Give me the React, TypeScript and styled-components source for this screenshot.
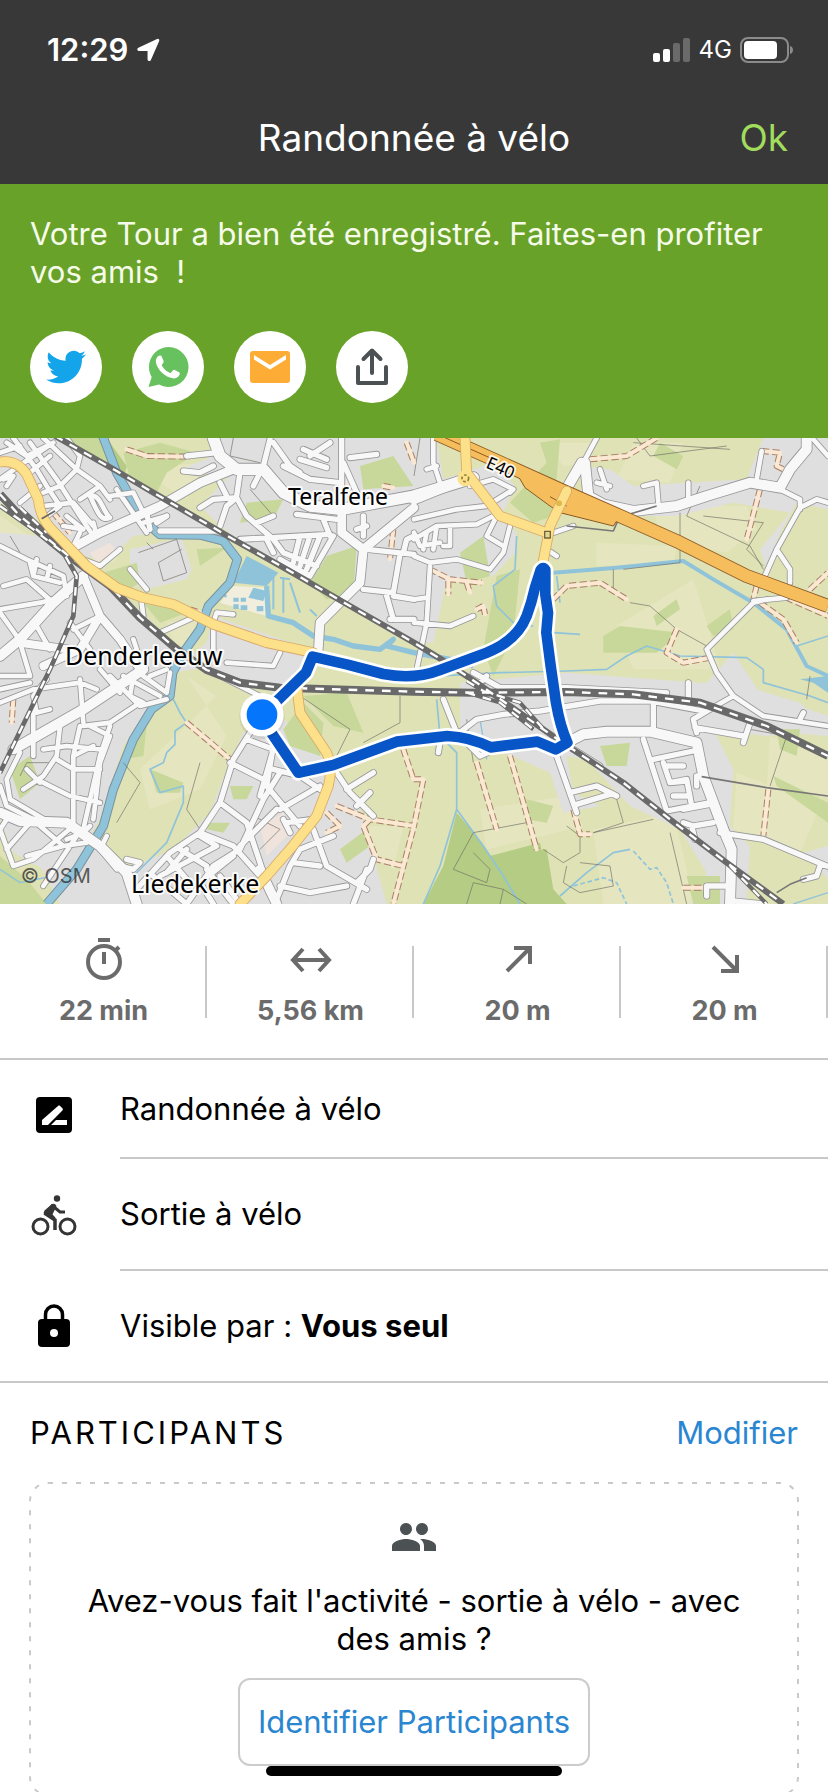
import React from "react";
import styled, { createGlobalStyle } from "styled-components";
import { FaTwitter } from "react-icons/fa";
import { MdPeople } from "react-icons/md";

const colors = {
  bar: "#383838",
  green: "#69a229",
  lime: "#a1dc5c",
  link: "#2a86d1",
  line: "#c8c8c8",
  stat: "#6b6b6b",
};

const GlobalStyle = createGlobalStyle`
  * { box-sizing: border-box; }
  html { scrollbar-width: none; }
  html::-webkit-scrollbar { display: none; }
  body {
    margin: 0;
    background: #fff;
    color: #000;
    font-family: Inter, "Liberation Sans", sans-serif;
    font-size: 31px;
    line-height: 38px;
  }
  svg { display: block; flex: none; }
`;

const Screen = styled.div`
  min-height: 100vh;
  overflow: hidden;
`;

const StatusBar = styled.div`
  display: flex;
  align-items: center;
  justify-content: space-between;
  height: 92px;
  padding: 8px 34px 0 47px;
  background: ${colors.bar};
  color: #fff;
`;

const StatusGroup = styled.div`
  display: flex;
  align-items: center;
  gap: 8px;
`;

const Clock = styled.span`
  font-size: 31px;
  font-weight: 600;
`;

const Network = styled.span`
  font-size: 24px;
  font-weight: 400;
`;

const TitleBar = styled.header`
  display: grid;
  grid-template-columns: 1fr auto 1fr;
  align-items: center;
  height: 92px;
  padding: 0 40px;
  background: ${colors.bar};
  color: #fff;
`;

const Title = styled.h1`
  grid-column: 2;
  margin: 0;
  font-size: 37px;
  font-weight: 400;
  line-height: 48px;
`;

const TextButton = styled.button<{ $color: string; $size: number }>`
  justify-self: end;
  padding: 0;
  border: 0;
  background: none;
  font: inherit;
  font-size: ${(p) => p.$size}px;
  color: ${(p) => p.$color};
`;

const Banner = styled.section`
  padding: 31px 30px 35px;
  background: ${colors.green};
  color: #f6fbe9;
`;

const BannerText = styled.p`
  margin: 0 0 40px;
  white-space: pre-wrap;
`;

const ShareList = styled.div`
  display: flex;
  gap: 30px;
`;

const ShareButton = styled.button`
  display: grid;
  place-items: center;
  width: 72px;
  height: 72px;
  padding: 0;
  border: 0;
  border-radius: 50%;
  background: #fff;
`;

const MapArea = styled.section`
  height: 466px;
  background: #dfe2b5;
  svg {
    width: 100%;
    height: 100%;
  }
`;

const Stats = styled.section`
  display: grid;
  grid-template-columns: repeat(4, 1fr);
  padding: 32px 0 30px;
  border-bottom: 2px solid ${colors.line};
`;

const Stat = styled.div`
  position: relative;
  display: flex;
  flex-direction: column;
  align-items: center;
  gap: 10px;
  color: ${colors.stat};
  font-size: 27px;
  font-weight: 700;
  line-height: 34px;
  &::after {
    content: "";
    position: absolute;
    right: 0;
    top: 10px;
    width: 2px;
    height: 72px;
    background: ${colors.line};
  }
`;

const Row = styled.div<{ $height: number }>`
  display: flex;
  align-items: center;
  height: ${(p) => p.$height}px;
  padding-left: 30px;
`;

const RowBody = styled.div<{ $last?: boolean }>`
  display: flex;
  flex: 1;
  align-items: center;
  height: 100%;
  margin-left: 42px;
  white-space: pre;
  border-bottom: ${(p) => (p.$last ? 0 : 2)}px solid ${colors.line};
`;

const Details = styled.section`
  border-bottom: 2px solid ${colors.line};
`;

const Participants = styled.section`
  padding: 31px 30px 0;
`;

const SectionHead = styled.div`
  display: flex;
  align-items: center;
  justify-content: space-between;
  margin-bottom: 30px;
`;

const SectionTitle = styled.h2`
  margin: 0;
  font-size: 31px;
  font-weight: 400;
  letter-spacing: 3px;
  text-transform: uppercase;
`;

const Card = styled.div`
  position: relative;
  display: flex;
  flex-direction: column;
  align-items: center;
  padding: 31px 48px 28px;
`;

const DashedFrame = styled.svg`
  position: absolute;
  inset: 0;
  width: 100%;
  height: 100%;
  overflow: visible;
  pointer-events: none;
`;

const Question = styled.p`
  margin: 21px 0 20px;
  text-align: center;
`;

const IdentifyButton = styled.button`
  height: 88px;
  padding: 0 18px;
  border: 2px solid #ccc;
  border-radius: 12px;
  background: #fff;
  font: inherit;
  color: ${colors.link};
`;

const HomeIndicator = styled.div`
  position: fixed;
  left: 50%;
  bottom: 16px;
  width: 296px;
  height: 10px;
  margin-left: -148px;
  border-radius: 5px;
  background: #000;
`;

/* ---------- icons ---------- */

const LocationIcon = () => (
  <svg width="24" height="24" viewBox="0 0 24 24" fill="#fff" aria-hidden="true">
    <path d="M21.400 1.600c.8-.3 1.400.3 1.100 1.100L14.200 21.600c-.5 1.100-1.900.9-1.900-.3V12.300H3.100c-1.200 0-1.500-1.400-.4-1.900z" stroke="#fff" strokeWidth="1.500" strokeLinejoin="round" />
  </svg>
);

const SignalIcon = () => (
  <svg width="38" height="24" viewBox="0 0 38 24" fill="#fff" aria-hidden="true">
    <rect x="0" y="15" width="7" height="9" rx="2" />
    <rect x="10" y="11" width="7" height="13" rx="2" />
    <rect x="20" y="5" width="7" height="19" rx="2" opacity=".25" />
    <rect x="30" y="0" width="7" height="24" rx="2" opacity=".25" />
  </svg>
);

const BatteryIcon = () => (
  <svg width="54" height="26" viewBox="0 0 54 26" aria-hidden="true">
    <rect x="1" y="1" width="47" height="24" rx="7" fill="none" stroke="#8b8b8b" strokeWidth="2" />
    <rect x="4" y="4" width="33" height="18" rx="4" fill="#fff" />
    <path d="M50 9c4 1 4 7 0 8z" fill="#8b8b8b" />
  </svg>
);

const WhatsAppIcon = () => (
  <svg width="42" height="42" viewBox="0 0 42 42" aria-hidden="true">
    <path d="M21.500 1a20 20 0 1 1-9.500 37.600L1.500 41l3.200-9.900A20 20 0 0 1 21.500 1z" fill="#67c15e" />
    <path d="M10.800 10.600c1.700-1.700 3.400-1.200 4 .2l1.700 4c.5 1.300-.2 2.300-1.400 3.600-.5.600-.4 1 0 1.700 1.700 3 4.200 5.300 7.600 6.700.6.300 1 .1 1.400-.4l1.700-2c.6-.7 1.200-.7 2-.4l3.900 1.900c1.100.6 1.300 1 .9 2.700-.6 2.200-3.300 3.900-5.600 3.800-8.700-.5-16.600-8.500-18-15.600-.5-2.300.2-4.600 1.800-6.200z" fill="#fff" />
  </svg>
);

const MailIcon = () => (
  <svg width="40" height="32" viewBox="0 0 40 32" aria-hidden="true">
    <rect width="40" height="32" rx="3" fill="#fdac35" />
    <path d="M4 4v4.500L20 18.500 36 8.500V4L20 14z" fill="#fff" />
  </svg>
);

const ShareIcon = () => (
  <svg width="36" height="40" viewBox="0 0 36 40" fill="none" stroke="#4c5154" strokeWidth="4" strokeLinecap="round" strokeLinejoin="round" aria-hidden="true">
    <path d="M4 20v16h28V20M18 26V4M9.500 12 18 3.500l8.500 8.500" />
  </svg>
);

const statIconProps = {
  width: 48,
  height: 48,
  viewBox: "0 0 48 48",
  fill: "none",
  stroke: colors.stat,
  strokeWidth: 4,
  "aria-hidden": true,
};

const StopwatchIcon = () => (
  <svg {...statIconProps}>
    <circle cx="24" cy="26" r="16" />
    <path d="M18 4h12M24 16v12M35 15l4-4" />
  </svg>
);

const DistanceIcon = () => (
  <svg {...statIconProps}>
    <path d="M7 24h34M16 13 6 24l10 11M32 13l10 11-10 11" />
  </svg>
);

const UphillIcon = () => (
  <svg {...statIconProps}>
    <path d="M13 35 35 13M20 12h16v16" />
  </svg>
);

const DownhillIcon = () => (
  <svg {...statIconProps}>
    <path d="M12 11l22 22M36 19v16H20" />
  </svg>
);

const RenameIcon = () => (
  <svg width="48" height="48" viewBox="0 0 48 48" aria-hidden="true">
    <rect x="6" y="11" width="36" height="36" rx="4" />
    <path d="M12 39v-5l16-14c.6-.6 1.500-.6 2.100 0l2.300 2.300c.6.6.6 1.500 0 2.100L18 39zM21 39l5-5h11v5z" fill="#fff" />
  </svg>
);

const CyclistIcon = () => (
  <svg width="48" height="48" viewBox="0 0 48 48" fill="none" stroke="#353535" aria-hidden="true">
    <circle cx="10.500" cy="35.500" r="7.500" strokeWidth="3" />
    <circle cx="37.500" cy="35.500" r="7.500" strokeWidth="3" />
    <circle cx="27" cy="7.500" r="3.200" fill="#353535" stroke="none" />
    <path d="M24 16l6 5h5" strokeWidth="3" />
    <path d="M23 14l-7 9 9 6v10" strokeWidth="3.500" />
    <path d="M22 13q3-1 4.500 2l-4 8.500 3 3-2 2-9-5q-1.500-2 0-4z" fill="#353535" stroke="none" />
  </svg>
);

const LockIcon = () => (
  <svg width="48" height="48" viewBox="0 0 48 48" aria-hidden="true">
    <rect x="8" y="17" width="32" height="28" rx="4" />
    <path d="M15.500 18v-5.500a8.500 8.500 0 0 1 17 0V18" fill="none" stroke="#000" strokeWidth="3.500" />
    <circle cx="24" cy="31" r="4" fill="#fff" />
  </svg>
);

/* ---------- map ---------- */

const urban = [
  "M0 6H170L350 115 640 275 650 292 470 290 400 300 330 370 250 360 140 260 0 200Z",
  "M390 340 545 305 575 400 560 430 440 460 415 450 390 430Z",
  "M555 95 640 60 630 6H1310L1330 130 1480 80 1545 150 1500 250 1550 290 1545 350 1480 420 1340 430 1300 620 1242 620 1050 510 720 320 640 250 600 210 680 130Z",
  "M0 290 130 300 330 440 520 620 640 690 520 710 470 800 370 930 300 1150 240 1260 130 1300 40 1250 0 1150Z",
  "M640 540 930 640 890 720 820 770 600 690 570 660 620 620Z",
  "M0 1150 150 1150 300 1230 380 1330 400 1404H180L120 1290Z",
  "M730 890 850 850 1010 1010 1080 1120 1120 1260 1160 1404H400L380 1300 520 1240 630 1130 680 1000Z",
  "M1740 90 1830 100 1900 150 2240 130 2290 6H2484V220L2390 200 2340 290 2300 400 2280 340 2370 230 2200 200 2030 240 1900 240 1760 180Z",
  "M1380 740 1700 710 2100 740 2200 740 2400 800 2484 880 2300 900 2140 880 2200 1000 2190 1170 2250 1230 2240 1404H2070L2120 1310 2040 1180 1890 1110 1760 970 1700 960 1720 1070 1800 1110 1690 1130 1650 1010 1380 890Z",
  "M2120 740 2200 650 2280 770 2484 840 2484 900 2240 880Z",
  "M2410 1250 2484 1230V1330Z",
];

const palePatches = [
  "M490 90 620 80 560 190 460 130Z",
  "M690 10 790 20 770 90 690 70Z",
  "M270 350 350 320 350 370 300 400Z",
  "M500 560 610 540 570 640 520 620Z",
  "M1640 20 1780 20 1770 80 1690 90Z",
  "M1900 20 2050 20 2010 140 1850 130Z",
  "M1790 320 2030 330 2020 380 1790 390Z",
  "M1960 210 2240 210 2270 280 2180 350 1980 310Z",
  "M1850 570 2080 430 2130 590 2160 700 1900 700Z",
  "M2310 900 2484 970V1080L2300 1060Z",
  "M2210 1010 2460 1110 2400 1250 2200 1180Z",
  "M1440 1120 1700 1080 1750 1170 1460 1240Z",
  "M420 1000 650 780 560 720 680 900 600 1060 450 1120Z",
  "M1100 1170 1210 1170 1180 1300 1120 1260Z",
  "M0 240 90 300 210 380 200 410 60 350 0 320Z",
  "M20 1030 60 980 110 1000 90 1080 40 1070Z",
  "M1780 1180 2020 1130 2060 1300 2080 1404H1810Z",
];

const greenPatches = [
  "M210 6H320L350 100 240 55Z",
  "M370 50 480 20 590 50 500 110 470 170 390 130Z",
  "M310 410 410 380 420 440 370 470Z",
  "M590 340 680 335 600 390Z",
  "M430 500 560 530 480 560Z",
  "M740 200 850 190 820 250 720 260Z",
  "M980 360 1070 330 1060 480 980 490 930 440Z",
  "M1080 90 1180 60 1240 150 1090 160Z",
  "M1620 20 1680 10 1660 240 1600 260 1530 200 1640 80Z",
  "M1380 350 1450 300 1470 420 1400 440Z",
  "M1490 420 1560 400 1540 600 1480 720 1450 640Z",
  "M1810 600 1860 570 2040 590 1970 650 1810 650Z",
  "M1960 540 2030 490 2040 520 1970 570Z",
  "M2120 570 2190 520 2200 580 2140 600Z",
  "M2060 1320 2160 1320 2160 1404 2080 1404Z",
  "M1980 20 2050 60 2030 100 1960 60Z",
  "M410 920 440 870 430 960 370 970Z",
  "M450 1000 550 1040 540 1070 470 1070Z",
  "M1020 1240 1100 1180 1110 1230 1040 1280Z",
  "M850 880 910 800 970 860 960 960 870 930Z",
  "M910 780 1040 770 1090 890 1000 870Z",
  "M0 1260 80 1330 140 1404H0Z",
  "M30 1000 90 960 120 1040 60 1090Z",
  "M690 1050 760 1050 740 1090 700 1090Z",
  "M620 1160 690 1160 670 1190 620 1180Z",
  "M1580 1090 1660 1110 1640 1160 1580 1150Z",
  "M2330 880 2400 880 2390 960 2340 940Z",
  "M2320 1020 2484 1100V1160L2330 1050Z",
  "M1800 930 1890 920 1880 990 1820 990Z",
];

const forest = [
  "M1370 1130 1430 1200 1470 1260 1640 1240 1660 1360 1700 1404H1270L1330 1290Z",
  "M1470 1260 1620 1220 1650 1360 1690 1404H1460Z",
  "M320 6 380 90 370 130 330 70Z",
];

const water = [
  "M740 360 835 410 800 450 700 440Z",
  "M760 455 800 465 790 495 745 485Z",
  "M2400 730 2484 720V770L2440 740Z",
];

const streams = [
  { w: 5, d: "M520 790 540 830 560 860 525 885 525 925 500 950 490 980 450 1000 480 1070 550 1050 550 1100 500 1220 400 1320" },
  { w: 16, d: "M800 450 805 540 880 560 940 600 1000 610 1060 630 1140 640 1180 610 1160 630 1242 650 1350 670 1420 690" },
  { w: 6, d: "M820 420V520M850 430V530M870 440 900 530M930 520 950 540M840 425 870 430" },
  { w: 12, d: "M1660 410 1850 395 2050 375 2140 430 2260 500 2360 580 2420 690 2484 720" },
  { w: 5, d: "M1550 300 1545 400 1480 450 1490 510 1550 570 1600 570M1670 420 1680 500M1660 590 1740 595M1320 720 1500 710 1700 705 1820 700 1880 660 1940 630 2040 660 2240 665 2290 700 2290 740 2430 780 2484 800" },
  { w: 5, d: "M1310 790 1320 900 1370 950 1370 1120 1320 1290 1270 1404M1370 1120 1450 1230 1510 1320 1560 1404M1680 1380 1760 1310 1840 1250 1890 1240" },
  { w: 4, d: "M2390 630 2484 600M1440 850 1460 970M2484 1370 2380 1404M0 1300 60 1340 160 1320" },
];

const paths =
  "M415 350 530 310 560 410 490 435 475 380 545 340M1242 120 1260 6M700 6 690 60 780 80M750 160 820 240M1900 20 2190 40M2100 150 2060 240 2250 330 2290 400M2040 230V380L1870 400M1840 400V460M1890 500 1950 510 2030 580 2120 630M2110 240 2290 260 2240 340 2290 390M370 980 420 1040 350 1160M600 980 560 1120 600 1180M900 780 1050 880 1010 960M1200 780V860L1090 920M1400 850 1420 980M1360 1300 1420 1190 1580 1160M1420 1250 1470 1300 1460 1340 1360 1300M1630 1240 1690 1280 1740 1250 1740 1200 1700 1170M1740 1280 1830 1290 1840 1350 1740 1370 1690 1340 1700 1290M1400 1404 1420 1340 1510 1360 1580 1404M1500 1404 1510 1360M1850 1090 1870 1160 1780 1190 1960 1150M2010 1190 2060 1404M2250 880 2360 900 2310 1050M1910 6 1950 60 2180 30M2430 720 2420 790M60 1020 80 980 150 980M760 1140 840 1180 780 1240M440 320 460 340M60 350 30 300";

type Road = { w: number; d: string };

const roads: Road[] = [
  // Denderleeuw, north of the railway
  { w: 14, d: "M0 130 100 60 160 20M40 6 110 100 140 150 180 210M90 20 170 130 240 240 280 300M130 6 230 100 300 150 330 190M200 6 240 60 230 100 180 150 130 170M0 50 60 30M60 200 120 150M130 210 220 200 280 270M150 60 90 110M330 180 400 170 430 230M190 270 250 280 200 240M270 180C300 170 310 230 330 245 300 260 290 220 270 180M20 150 40 120 10 130M300 150 240 190M350 160 440 290M430 260 500 240M20 20 80 60 140 30M280 260 290 300M180 210 130 250M240 290 220 330M250 370 300 390 360 340M390 400 440 460" },
  { w: 26, d: "M210 340 300 290 480 210 600 140 700 100" },
  // Teralfene
  { w: 34, d: "M640 6 660 60 710 100 790 100 850 170 930 210 1025 220 1242 180 1420 125" },
  { w: 26, d: "M1025 220V290L1090 340 1080 440 960 560 955 640M1090 340 1242 215" },
  { w: 16, d: "M550 105 600 110 640 90M560 60 650 50M810 10 790 90M820 20 870 90 900 110M900 70 980 95M850 90 930 130 1020 140M910 40 980 70M930 60 990 20M1025 6V210M1050 65 1130 55M1030 80 1070 170M480 285 650 285M660 270 680 210 710 185M710 180 720 110M710 185 740 240 820 310 850 350 950 390M600 215 640 190 710 185M660 140 680 180M770 260 820 240M890 235 1010 250M720 310 990 295M1000 300 930 420M900 300 880 380M930 300 900 390M960 300 920 400M840 370 930 420M800 310 820 350M990 300 970 250M760 150 780 110M1100 340 1242 355M1200 355 1180 470 1090 460M1180 480 1242 490M1170 550H1242M1160 480 1180 550M1210 350 1220 310 1242 300M1090 240V300M1070 280 1100 270M440 230 450 280M470 260 500 240" },
  // riverside block and the streets around it
  { w: 14, d: "M425 500 430 540M480 590 580 545M640 640V560L650 530 700 535M640 640 620 700M840 650 820 690 680 680M400 610 410 640M780 780 700 740 600 690" },
  // Denderleeuw, south of the railway
  { w: 30, d: "M0 660 60 610 160 500 250 420M0 1130 60 1155 200 1160 300 1230 380 1310 410 1404M40 940 250 820 430 700" },
  { w: 24, d: "M250 420 300 540 240 640 130 690M300 540 360 610 420 700M60 620 200 640" },
  { w: 14, d: "M0 330 80 370 190 420 200 480M90 380 100 420 180 440M110 370 100 420M150 390 140 430M0 520 120 500 200 480M10 450 80 430 160 500M50 600 0 530M110 570 150 640M210 560 270 640M300 540 220 580M60 620 90 720 0 720M0 800 100 760 240 740 290 760M140 730 100 780 110 830 150 820M100 820V960M240 730 250 860M250 870 330 860 420 800M270 870 330 900 300 980 280 1150M330 870 300 960 250 1180M240 870 220 960 220 1160M180 870 170 960 130 1020 70 1060M130 940 200 930 300 940M170 970 220 1000 300 1000M110 1030 210 1080 300 1100M220 960 280 930M60 950 20 1030 30 1090 150 1160M80 1000 120 1040M0 1050 20 1110 100 1150M20 1150 0 1180 40 1290 100 1270 220 1170M90 1160 20 1240M120 1170 190 1230 80 1260M230 1200 130 1350M200 1210 250 1190 270 1170M190 1230 260 1220M320 1200 300 1240 350 1300M330 720 420 810 500 790M370 720 480 780M430 720 500 770 510 710M300 700 360 770M400 720 390 780 430 800M450 720 500 700M0 760 90 740" },
  // Liedekerke
  { w: 16, d: "M750 890 700 970 660 1100 600 1190 510 1250 400 1370M740 910 820 940 780 1080M820 930 800 1050 900 1170M690 980 790 1030M660 1100 740 1160 800 1340M840 1010 790 1090 720 1240 640 1290 560 1404M820 1000 900 1020 960 1060M960 1050 840 1120M830 1120 720 1230M600 1190 700 1230 780 1320M500 1260 560 1330M540 1240 620 1290M600 1200 650 1230 480 1320M560 1240 500 1310M380 1270 420 1280 400 1300 360 1290M860 1160 940 1150M850 1150 870 1190M940 1180 980 1290 1100 1360M870 1290 900 1240 1000 1200M880 1280 960 1290M870 1290 830 1390M840 1350 930 1370 1040 1350M1100 1300 1060 1404M1120 1270 1110 1300 1070 1340M1010 1010 1050 1070 1120 1140M1040 1060 1120 1010M1070 1110 1110 1070M620 1300 700 1404M700 1260 600 1340 640 1404M460 1320 560 1404M660 1320 720 1404" },
  { w: 28, d: "M780 1300 830 1404" },
  // east of Teralfene
  { w: 30, d: "M1242 190 1390 130M1690 175 1745 80M1755 80 1765 180 1810 205 1900 225 2030 210 2120 180 2250 140 2340 155 2370 100 2420 40V6" },
  { w: 14, d: "M1300 6V80L1320 140M1280 100 1310 90M1242 250 1370 220 1460 210 1540 160 1500 140 1480 130 1410 150M1540 160 1530 170M1242 310 1310 270 1430 265 1480 240M1310 270 1300 340M1350 270V330L1330 330M1242 290 1260 330 1320 320M1280 290 1270 340M1490 240 1460 300 1510 330M1530 270 1510 350 1470 400 1370 370 1290 380 1242 360M1290 390 1280 560 1250 700M1242 560 1350 570 1420 540M1242 490 1280 485M1750 80 1790 6M1790 140 1830 150M1800 100 1820 160M1930 150 1970 140 1975 200M2065 140V200M2270 130 2285 45M2340 160 2400 190 2400 220M2400 215 2450 190 2484 200M2400 215 2330 340 2290 430M2330 340 2370 400V440M1660 290 1720 270M1640 340 1670 360M2300 490 2260 500 2120 640 2150 710 2200 780 2290 840 2484 870M2260 495 2360 485M2200 780 2130 820M2440 10 2484 60" },
  // around the railway fork
  { w: 30, d: "M1700 920 1750 895 1820 887H1950L2090 920 2110 1020 2170 1180 2195 1240 2190 1404" },
  { w: 16, d: "M1420 710 1500 755 1700 755 2000 770M1385 885 1430 850 1510 835 1620 825 1800 795 1950 795 2110 825M1960 800V890M1330 790 1370 890 1440 960M1440 960 1530 920M1440 740 1460 720M1930 910 2000 1125 2130 1100M1960 970 2080 945M1990 980 2010 1040 2060 1030 2075 1110M2000 990 2050 990M2010 1040 2060 1035M2020 1080H2070M2120 1350H2180M2120 1350V1380M2050 1160 2080 1170 2140 1160M2075 1170 2085 1210M2065 740V790M2090 890 2080 850 2130 820M2085 875 2230 900M2250 860 2230 920M2400 850 2410 830M2160 1190 2290 1210 2480 1290M2460 1290 2450 1320 2410 1330M1670 960 1730 1130M1710 1070 1790 1050 1850 1080M1730 1105 1830 1075M1720 940 1800 990M2090 1020V1050M1320 920 1315 950M2200 1395 2290 1404M2050 1120 2130 1105" },
];

const tracks =
  "M380 40 440 60 570 62M160 230 210 290M1150 150 1180 155M1180 280 1170 370M1220 20 1242 80M570 520 600 530M40 790 35 860M560 860 620 910 690 970M1010 1110 1110 1150 1242 1170 1180 1404M980 1130 1020 1170 980 1190M1110 1150 1090 1170 1130 1270 1210 1290M1210 940 1240 1030 1270 1030 1242 1170M1430 980 1490 1180M1530 960 1610 1240M1720 1120 1740 1195 1770 1195M1770 70 1880 60 1970 6M1290 400 1350 430 1445 440M1345 435V475M1400 440 1410 470M1430 520 1450 510 1455 535M1660 490 1700 450 1800 440 1880 490M2280 160 2240 310M2285 45 2340 50 2330 90 2350 100M2030 580 2000 650 2050 680 2130 665M2280 500 2350 550 2390 620M2360 485 2484 540M2430 460 2484 410M2270 450 2260 490M2305 1060 2290 1200M2050 1355H2120";

const motorway = "M1310 -6 1480 70 1690 165 1860 240 2040 320 2240 420 2484 510";

const mainRoads = [
  "M0 78Q50 70 80 115L115 190Q120 240 150 275L260 390 350 455 430 485 520 505 640 565 800 620 940 650",
  "M890 750 900 830 980 950Q1000 990 985 1050L950 1140 870 1240 800 1320 720 1404",
  "M1395 6 1400 110 1500 240 1640 290M1700 165 1650 270 1625 400",
];

const rails = [
  { w: 18, d: "M165 0 350 105 520 205 700 310 860 400 1050 510 1242 620 1340 680 1430 740 1530 810 1680 915 1870 1040 2010 1150 2180 1280 2350 1404" },
  { w: 24, d: "M0 175 60 240 200 355 330 450 420 545 530 640 620 702 720 740 840 755 1242 767 1420 770 1700 768 1900 775 2100 800 2300 870 2484 960" },
  { w: 14, d: "M0 210 100 280 190 350 230 420 220 540 150 700 0 1010" },
  { w: 12, d: "M1400 735 1450 765 1560 800 1640 890M1400 770 1500 800 1600 880M2190 1290 2300 1404M60 215 140 290" },
];

const river =
  "M308 0 350 110 390 180 450 270 480 296 600 297 670 315 712 370 690 440 625 510 600 580 550 650 518 710 510 780 455 820 400 910 340 1060 310 1170 230 1300 140 1404";

const route =
  "M790 835 875 752 918 710 938 662 1040 685 1150 714Q1242 732 1320 702L1460 650Q1550 615 1580 540 1595 500 1605 455L1622 402Q1630 390 1636 402V475L1644 530 1639 590 1652 690 1668 800Q1680 870 1702 920L1667 940 1612 917 1472 934Q1410 903 1342 900L1190 917 1000 987 895 1010 815 892Z";

const MapDrawing = () => (
  <svg viewBox="0 6 2484 1398" preserveAspectRatio="xMidYMid slice" role="img" aria-label="Carte du Tour" strokeLinejoin="round">
    <rect y="6" width="2484" height="1398" fill="#dfe2b5" />
    <g fill="#e5e6bf">{palePatches.map((d) => <path key={d} d={d} />)}</g>
    <g fill="#e0dfdf">{urban.map((d) => <path key={d} d={d} />)}</g>
    <g fill="#c8d79a">{greenPatches.map((d) => <path key={d} d={d} />)}</g>
    <g fill="#b4cc83">{forest.map((d) => <path key={d} d={d} />)}</g>
    <path d="M700 450 810 455 800 540 660 500Z" fill="#f1eedd" />
    <path d="M270 350 330 320 350 350 290 380ZM780 1170 850 1130 870 1190 800 1260ZM1020 130 1060 140 1060 180 1020 170Z" fill="#f0e3dc" />
    <g fill="#8fc3da">
      {water.map((d) => <path key={d} d={d} />)}
      <path d="M700 485h16v12h-16zM722 485h16v12h-16zM700 505h16v14h-16zM722 508h20v14h-20zM770 510h20v16h-20zM672 476h8v8h-8z" />
    </g>
    <g fill="none" stroke="#8fc3da">
      {streams.map((s) => <path key={s.d} d={s.d} strokeWidth={s.w} />)}
      <path d="M1900 1245 1950 1300 1970 1295 2000 1340 2020 1404M1720 1350 1810 1325 1850 1340 1880 1404" strokeWidth="5" strokeDasharray="14 8" />
      <path d={river} strokeWidth="28" stroke="#78919c" />
      <path d={river} strokeWidth="22" />
    </g>
    <path d={paths} fill="none" stroke="#6f6f66" strokeWidth="2" />
    <g fill="none" strokeLinecap="round">
      <path d={tracks} stroke="#a97f66" strokeWidth="18" strokeDasharray="22 10" strokeLinecap="butt" />
      <path d={tracks} stroke="#fae8d2" strokeWidth="12" />
      {roads.map((r) => <path key={r.d} d={r.d} stroke="#97979a" strokeWidth={r.w + 5} />)}
      {roads.map((r) => <path key={r.d} d={r.d} stroke="#f8f8f8" strokeWidth={r.w} />)}
    </g>
    <path d="M2105 1022 2300 1055 2484 1080M1700 270 1840 285 1860 240M1830 210 1870 240 1970 210M2330 1370 2370 1345 2420 1325" fill="none" stroke="#777" strokeWidth="5" />
    <g fill="none">
      {rails.map((r) => <path key={r.d} d={r.d} stroke="#696969" strokeWidth={r.w} />)}
      {rails.map((r) => <path key={r.d} d={r.d} stroke="#fff" strokeWidth="7" strokeDasharray="26 24" />)}
    </g>
    <path d={motorway} fill="none" stroke="#8b5a24" strokeWidth="42" />
    <path d="M1540 95 1690 150 1760 190 1860 240 1840 270 1680 230 1650 210 1575 155Z" fill="#f6bd5c" stroke="#8b5a24" strokeWidth="3" />
    <path d={motorway} fill="none" stroke="#f6bd5c" strokeWidth="37" />
    <path d="M1650 182 1700 210M1310 -6 1480 70" fill="none" stroke="#8b5a24" strokeWidth="3" />
    <g fill="none" strokeLinecap="round">
      {mainRoads.map((d) => <path key={d} d={d} stroke="#d7a968" strokeWidth="32" />)}
      {mainRoads.map((d) => <path key={d} d={d} stroke="#fde08a" strokeWidth="27" />)}
    </g>
    <circle cx="1396" cy="127" r="24" fill="#fde08a" />
    <circle cx="1396" cy="127" r="10" fill="none" stroke="#8f7b3a" strokeWidth="5" strokeDasharray="8 6" />
    <circle cx="1677" cy="202" r="9" fill="#e2b84c" />
    <rect x="1634" y="286" width="17" height="20" fill="#e4d590" stroke="#6e6540" strokeWidth="4" />
    <path d="M125 248 165 225" stroke="#666" strokeWidth="5" />
    <g fontFamily='"Noto Sans", sans-serif' fontSize="75" fill="#000" stroke="#fff" strokeOpacity=".85" strokeWidth="12" paintOrder="stroke">
      <text x="864" y="208" fontSize="69">Teralfene</text>
      <text x="195" y="686">Denderleeuw</text>
      <text x="393" y="1370">Liedekerke</text>
      <text x="1455" y="94" fontSize="51" transform="rotate(24 1455 94)">E40</text>
    </g>
    <path d="M1158 702q8-12 20 0M1192 702h8M1504 606h4" fill="none" stroke="#000" strokeWidth="6" />
    <text x="62" y="1340" fontFamily="Inter, sans-serif" fontSize="60" fill="#333" fillOpacity=".8">© OSM</text>
    <path d={route} fill="none" stroke="#fff" strokeWidth="48" />
    <path d={route} fill="none" stroke="#0755c6" strokeWidth="32" />
    <circle cx="786" cy="842" r="68" fill="#000" opacity=".08" />
    <circle cx="786" cy="836" r="65" fill="#fff" />
    <circle cx="786" cy="836" r="46" fill="#0576fc" />
  </svg>
);

/* ---------- page ---------- */

const stats = [
  { icon: <StopwatchIcon />, value: "22 min" },
  { icon: <DistanceIcon />, value: "5,56 km" },
  { icon: <UphillIcon />, value: "20 m" },
  { icon: <DownhillIcon />, value: "20 m" },
];

export default function App() {
  return (
    <Screen>
      <GlobalStyle />
      <StatusBar>
        <StatusGroup>
          <Clock>12:29</Clock>
          <LocationIcon />
        </StatusGroup>
        <StatusGroup>
          <SignalIcon />
          <Network>4G</Network>
          <BatteryIcon />
        </StatusGroup>
      </StatusBar>
      <TitleBar>
        <Title>Randonnée à vélo</Title>
        <TextButton $color={colors.lime} $size={37}>Ok</TextButton>
      </TitleBar>

      <Banner>
        <BannerText>{"Votre Tour a bien été enregistré. Faites-en profiter vos amis  !"}</BannerText>
        <ShareList>
          <ShareButton aria-label="Twitter"><FaTwitter size={40} color="#14a4ea" /></ShareButton>
          <ShareButton aria-label="WhatsApp"><WhatsAppIcon /></ShareButton>
          <ShareButton aria-label="E-mail"><MailIcon /></ShareButton>
          <ShareButton aria-label="Partager"><ShareIcon /></ShareButton>
        </ShareList>
      </Banner>

      <MapArea><MapDrawing /></MapArea>

      <Stats>
        {stats.map((s, i) => (
          <Stat key={i}>
            {s.icon}
            {s.value}
          </Stat>
        ))}
      </Stats>

      <Details>
        <Row $height={99}>
          <RenameIcon />
          <RowBody>Randonnée à vélo</RowBody>
        </Row>
        <Row $height={112}>
          <CyclistIcon />
          <RowBody>Sortie à vélo</RowBody>
        </Row>
        <Row $height={110}>
          <LockIcon />
          <RowBody $last>Visible par : <strong>Vous seul</strong></RowBody>
        </Row>
      </Details>

      <Participants>
        <SectionHead>
          <SectionTitle>Participants</SectionTitle>
          <TextButton $color={colors.link} $size={31}>Modifier</TextButton>
        </SectionHead>
        <Card>
          <DashedFrame aria-hidden="true">
            <rect x="0" y="1" width="100%" height="100%" rx="18" fill="none" stroke="#c9c9c9" strokeWidth="2" strokeDasharray="5 9" />
          </DashedFrame>
          <MdPeople size={48} color="#4c5154" />
          <Question>Avez-vous fait l'activité - sortie à vélo - avec des amis ?</Question>
          <IdentifyButton>Identifier Participants</IdentifyButton>
        </Card>
      </Participants>
      <HomeIndicator />
    </Screen>
  );
}
